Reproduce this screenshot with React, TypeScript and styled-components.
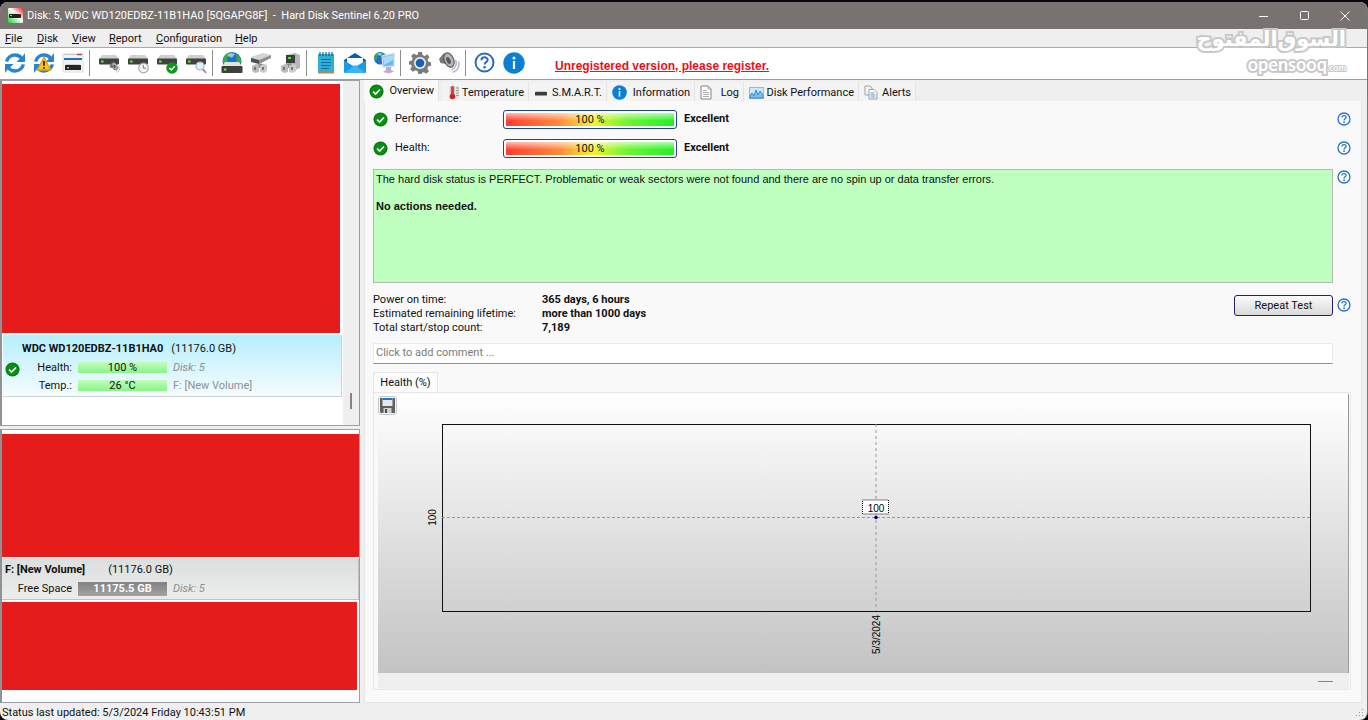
import React from "react";
import styled, { createGlobalStyle, css } from "styled-components";

const UI_FONT = `Roboto, "Noto Sans", sans-serif`;
const ARIAL = `"Liberation Sans", Arial, sans-serif`;

const GlobalStyle = createGlobalStyle`
  *, *::before, *::after { box-sizing: border-box; }
  body { margin: 0; background: #08070d; color: #111; font: 11px/14px ${UI_FONT}; }
  button, input { font: inherit; color: inherit; margin: 0; }
  svg { display: block; flex: none; }
  h1, h2, p, dl, dd, dt, ul { margin: 0; padding: 0; font: inherit; }
`;

/* ---------- window frame ---------- */

const Desktop = styled.div`
  min-height: 100vh;
  padding-top: 2px;
  display: flex;
  flex-direction: column;
`;

const Window = styled.div`
  position: relative;
  flex: 1;
  display: flex;
  flex-direction: column;
  border-right: 1px solid #77747a;
  border-radius: 8px;
  overflow: hidden;
  background: #efefef;
`;

const TitleBar = styled.header`
  display: flex;
  align-items: center;
  height: 27px;
  padding: 0 12px 0 8px;
  background: #787371;
  color: #fff;
`;

const Title = styled.h1`
  flex: 1;
  padding-left: 4px;
  white-space: pre;
`;

const WindowButton = styled.button`
  display: grid;
  place-items: center;
  width: 41px;
  height: 25px;
  padding: 0;
  border: 0;
  background: none;
  &:last-child { width: 20px; margin-left: 10px; }
`;

const MenuBar = styled.nav`
  display: flex;
  height: 18px;
`;

const MenuButton = styled.button<{ $w: number }>`
  width: ${(p) => p.$w}px;
  padding: 2px 5px 0;
  border: 0;
  background: none;
  text-align: left;
`;

const Toolbar = styled.div`
  display: flex;
  align-items: center;
  height: 33px;
  padding-bottom: 2px;
  background: #fff;
  border-top: 1px solid #a9a9a9;
  border-bottom: 1px solid #9c9c9c;
`;

const ToolButton = styled.button`
  display: grid;
  place-items: center;
  width: 29px;
  height: 28px;
  padding: 0;
  border: 0;
  background: none;
`;

const ToolSeparator = styled.span`
  width: 1px;
  height: 26px;
  margin: 0 4px 0 2px;
  background: #8c8c8c;
`;

const RegisterLink = styled.a`
  margin-left: 27px;
  padding-top: 6px;
  color: #f00c18;
  font: bold 12px/16px ${ARIAL};
`;

const Main = styled.main`
  flex: 1;
  display: flex;
`;

const StatusBar = styled.footer`
  display: flex;
  justify-content: space-between;
  height: 17px;
  padding: 3px 2px 0;
`;

/* ---------- left side ---------- */

const Sidebar = styled.aside`
  display: flex;
  flex-direction: column;
  gap: 3px;
  width: 360px;
  flex: none;
`;

const ListBox = styled.section<{ $grow?: boolean }>`
  display: flex;
  background: #fff;
  border: 1px solid #9aa0a5;
  border-left: 2px solid #8d9399;
  ${(p) => (p.$grow ? "flex: 1;" : "height: 346px;")}
`;

const ListItems = styled.div<{ $top: number }>`
  flex: 1;
  display: flex;
  flex-direction: column;
  padding-top: ${(p) => p.$top}px;
`;

const ScrollTrack = styled.div`
  display: flex;
  align-items: flex-end;
  justify-content: center;
  width: 16px;
  padding-bottom: 16px;
  background: #efefef;
`;

const ScrollThumb = styled.span`
  width: 2px;
  height: 16px;
  background: #858585;
`;

const HiddenBlock = styled.div<{ $h: number; $inset: number }>`
  height: ${(p) => p.$h}px;
  margin-right: ${(p) => p.$inset}px;
  background: #e61b1b;
`;

const DriveCard = styled.article`
  display: flex;
  align-items: center;
  height: 62px;
  margin: 2px 1px 0;
  border-right: 1px solid #c3d6dc;
  border-bottom: 1px solid #cbd3d6;
  border-top: 1px solid #cdebf4;
  background: linear-gradient(#b6effc, #f6fcfe);
  svg { margin: 7px 2px 0; }
`;

const DriveBody = styled.div`
  flex: 1;
  display: flex;
  flex-direction: column;
  gap: 4px;
`;

const DriveName = styled.h2`
  line-height: 17px;
  b { margin-right: 8px; }
`;

const MeterRow = styled.div<{ $label: number }>`
  display: grid;
  grid-template-columns: ${(p) => p.$label}px 89px 1fr;
  column-gap: 6px;
  align-items: center;
  height: 14px;
  > :first-child { text-align: right; }
`;

const SmallBar = styled.span<{ $free?: boolean }>`
  display: block;
  height: ${(p) => (p.$free ? 14 : 11)}px;
  line-height: ${(p) => (p.$free ? 14 : 11)}px;
  text-align: center;
  background: linear-gradient(#c2fdbd, #8af488);
  ${(p) =>
    p.$free &&
    css`
      background: linear-gradient(#828282, #a2a2a2);
      color: #fff;
      font-weight: 700;
    `}
`;

const Muted = styled.span`
  color: #8b9092;
`;

const VolumeCard = styled.article`
  display: flex;
  flex-direction: column;
  gap: 5px;
  height: 42px;
  margin: 1px 0 2px;
  padding: 3px 0 0 3px;
  border: 1px solid #c2c2c2;
  border-left: 0;
  border-top-color: #dadada;
  background: linear-gradient(#dcdfdf, #ececec);
`;

const VolumeName = styled.h2`
  display: flex;
  gap: 23px;
  line-height: 15px;
`;

/* ---------- right side ---------- */

const Details = styled.section`
  flex: 1;
  min-width: 0;
  display: flex;
  flex-direction: column;
  padding: 0 5px 0 4px;
`;

const Tabs = styled.div`
  display: flex;
  align-items: flex-end;
  height: 21px;
`;

const Tab = styled.button<{ $w: number; $active?: boolean }>`
  display: flex;
  align-items: center;
  justify-content: space-between;
  width: ${(p) => p.$w}px;
  height: 19px;
  padding: 2px 4px 0 5px;
  border: 0;
  border-right: 1px solid #e3e3e3;
  background: #f3f3f3;
  white-space: nowrap;
  ${(p) =>
    p.$active &&
    css`
      height: 21px;
      padding-bottom: 1px;
      margin-right: 3px;
      background: #f9f9f9;
    `}
`;

const Page = styled.div`
  flex: 1;
  display: flex;
  flex-direction: column;
  padding: 8px 10px 12px 8px;
  background: #f9f9f9;
  border: 1px solid #e6e6e6;
  border-top: 0;
`;

const HelpRow = styled.div`
  display: grid;
  grid-template-columns: minmax(0, 1fr) 14px;
  column-gap: 4px;
  align-items: start;
`;

const HelpButton = styled.button<{ $drop?: number }>`
  display: grid;
  width: 14px;
  height: 14px;
  margin-top: ${(p) => p.$drop ?? 3}px;
  padding: 0;
  border: 0;
  background: none;
`;

const Score = styled.div`
  display: grid;
  grid-template-columns: 22px 108px 174px 1fr;
  align-items: center;
  height: 20px;
  margin-bottom: 9px;
  line-height: 16px;
  b { padding-left: 7px; }
`;

const ScoreBar = styled.div`
  height: 19px;
  padding: 2px;
  border: 1px solid #1f4688;
  border-radius: 3px;
  background: #fff;
  text-align: center;
  span {
    display: block;
    height: 13px;
    line-height: 13px;
    background:
      linear-gradient(rgba(255, 255, 255, 0.65), rgba(255, 255, 255, 0) 60%),
      linear-gradient(90deg, #ff3b30, #ff8a3c 32%, #f3f52c 52%, #6df531 72%, #22f02a);
  }
`;

const StatusText = styled.div`
  height: 114px;
  margin-top: 2px;
  padding: 3px 2px;
  border: 1px solid #b4bab0;
  background: #bfffbf;
  font: 11px/13px ${ARIAL};
  p + p { margin-top: 14px; font-weight: 700; }
`;

const InfoRow = styled.div`
  display: flex;
  justify-content: space-between;
  height: 60px;
  padding-top: 10px;
`;

const Facts = styled.dl`
  display: grid;
  grid-template-columns: 169px auto;
  grid-auto-rows: 14px;
  dd { font-weight: 700; }
`;

const RepeatButton = styled.button`
  width: 99px;
  height: 21px;
  margin-top: 2px;
  padding: 0;
  border: 1px solid #20206e;
  border-radius: 3px;
  background: linear-gradient(#fafafa, #d9d9d9);
`;

const Comment = styled.input`
  width: 100%;
  height: 21px;
  padding: 0 2px 2px;
  border: 1px solid #ededed;
  border-bottom-color: #8e8e8e;
  background: #fff;
  &::placeholder { color: #7b7b7b; opacity: 1; }
`;

const HealthTab = styled.button`
  align-self: flex-start;
  width: 65px;
  height: 20px;
  margin-top: 8px;
  padding: 0;
  border: 1px solid #e6e6e6;
  border-bottom: 0;
  background: #fcfcfc;
`;

const ChartPanel = styled.div`
  flex: 1;
  display: flex;
  flex-direction: column;
  padding: 1px 1px 0 4px;
  border: 1px solid #e9e9e9;
`;

const Chart = styled.div`
  flex: 1;
  display: flex;
  flex-direction: column;
  padding: 2px 38px 62px 64px;
  border-right: 1px solid #999;
  background: linear-gradient(#fff, #c3c3c3);
`;

const SaveButton = styled.button`
  display: grid;
  place-items: center;
  width: 19px;
  height: 19px;
  margin: 0 0 9px -64px;
  padding: 0;
  border: 1px solid #c9c9c9;
  border-radius: 3px;
  background: #f3f3f3;
`;

const Plot = styled.svg`
  flex: 1 1 186px;
  width: 100%;
  min-height: 186px;
  overflow: visible;
  font: 10px ${ARIAL};
`;

const ChartScroll = styled.div`
  display: flex;
  justify-content: flex-end;
  align-items: center;
  height: 16px;
  padding-right: 16px;
  background: #efefef;
  span { width: 15px; height: 1px; background: #858585; }
`;

/* ---------- watermark ---------- */

const Watermark = styled.div`
  position: absolute;
  top: 22px;
  right: 21px;
  display: flex;
  flex-direction: column;
  align-items: flex-end;
  color: #fff;
  -webkit-text-stroke: 4px #c8c8c8;
  paint-order: stroke fill;
  pointer-events: none;
`;

const WatermarkArabic = styled.div`
  display: flex;
  font: bold 21px/30px "DejaVu Sans", sans-serif;
  white-space: nowrap;
`;

const WatermarkLatin = styled.div`
  display: flex;
  align-items: baseline;
  font: bold 18px/20px Lato, sans-serif;
  small { font-size: 9px; line-height: 12px; -webkit-text-stroke-width: 2px; }
`;

/* ---------- icons ---------- */

const Check = ({ size = 15 }: { size?: number }) => (
  <svg width={size} height={size} viewBox="0 0 16 16">
    <circle cx="8" cy="8" r="7.5" fill="#0a8f13" />
    <circle cx="8" cy="8" r="6.6" fill="none" stroke="#0b780f" />
    <path d="M4.4 8.2 7 10.7 11.7 5.8" fill="none" stroke="#fff" strokeWidth="1.7" />
  </svg>
);

const Question = ({ size = 14, color = "#2b72c8" }: { size?: number; color?: string }) => (
  <svg width={size} height={size} viewBox="0 0 22 22">
    <circle cx="11" cy="11" r="9.4" fill="#fff" stroke={color} strokeWidth="2.1" />
    <path d="M7.8 8.7c0-4.2 6.5-4 6.5-.4 0 2.4-3.2 2.3-3.2 4.9" fill="none" stroke={color} strokeWidth="2.1" />
    <circle cx="11.1" cy="16" r="1.4" fill={color} />
  </svg>
);

const Info = ({ size = 15 }: { size?: number }) => (
  <svg width={size} height={size} viewBox="0 0 22 22">
    <circle cx="11" cy="11" r="10.7" fill="#0b80d2" />
    <circle cx="11" cy="6" r="1.5" fill="#fff" />
    <rect x="9.9" y="9" width="2.2" height="8" fill="#fff" />
  </svg>
);

const AppIcon = () => (
  <svg width="15" height="15" viewBox="0 0 15 15">
    <defs>
      <linearGradient id="appIcon" x1="1" y1="0" x2="0" y2="1">
        <stop offset="0" stopColor="#f02323" />
        <stop offset=".45" stopColor="#fff" />
        <stop offset="1" stopColor="#10d52a" />
      </linearGradient>
    </defs>
    <rect width="15" height="15" rx="1" fill="url(#appIcon)" />
    <path d="m3 5 8-1 2 2H1z" fill="#ddd" />
    <rect x="1" y="6" width="12" height="4" rx="1" fill="#222" />
    <rect x="2" y="7" width="2" height="1" fill="#4f4" />
  </svg>
);

const RefreshShape = () => (
  <g fill="none" stroke="#2785d3" strokeWidth="3.4">
    <path d="M2.6 9.6C3.6 5.6 7 3 11 3c2.8 0 5.2 1.3 6.6 3.4" />
    <path d="M19.4 12.4C18.4 16.4 15 19 11 19c-2.8 0-5.2-1.3-6.6-3.4" />
    <path d="M21 1v9h-8.500l3-3L18 5zM1 21v-9h8.500l-3 3L4 17z" fill="#2785d3" stroke="none" />
  </g>
);

const DriveShape = () => (
  <g>
    <path d="M4 4h14l3 4H1z" fill="#cfcfcf" />
    <rect x="1" y="7.500" width="20" height="6" rx="1" fill="#414141" />
    <rect x="3" y="9.500" width="2.600" height="2" fill="#55f02c" />
  </g>
);

const Speaker = () => (
  <g>
    <path d="M1 7 5.500 1.500 11 2l4 12-3 2-4-4-5.500-1z" fill="#77777a" />
    <ellipse cx="11" cy="8" rx="4.600" ry="7.500" transform="rotate(-24 11 8)" fill="#b4b5b8" stroke="#5d5d60" strokeWidth="1.200" />
    <ellipse cx="10.500" cy="8.500" rx="2" ry="3.600" transform="rotate(-24 10.500 8.500)" fill="#55565a" />
    <path d="M17.500 8c2 4 0 8-4 10M20.500 9.500c1.300 5-1 9-6 11" fill="none" stroke="#b4b4cc" strokeWidth="1.500" />
  </g>
);

const Globe = () => (
  <g>
    <circle cx="11" cy="9.500" r="9.500" fill="#1c72c8" />
    <path d="M3 5C5 1.500 9 0 12 .5L10 4 6 6l1 4-3 3C1.500 11 1.500 8 3 5zM14 2c4 1 6 4 6.500 8L17 13l-2-4 1-3z" fill="#3ba84a" />
    <path d="M6 3c3-2 6-2 8-1l-3 4z" fill="#bfe7ff" opacity=".7" />
  </g>
);

const Plug = () => (
  <g>
    <path d="M7 13c2-2 5-2 7 0v3H7z" fill="#8b8d8e" />
    <path d="M2 14l4-2 3 1v7l-4 1-3-2z" fill="#b9bbbc" />
    <path d="M10 14l4-2 3 1v6l-3 2-4-1z" fill="#c9cbcc" />
    <path d="M4 15h2v3H4zM12 15h2v3h-2z" fill="#737576" />
  </g>
);

const toolIcons: Record<string, React.ReactNode> = {
  refresh: <RefreshShape />,
  warn: (
    <>
      <RefreshShape />
      <path d="M11 5.500 17.800 18H4.200z" fill="#fdc514" stroke="#e2a20b" strokeLinejoin="round" strokeWidth="1.500" />
      <path d="M11 9v4.800" stroke="#3b2d0a" strokeWidth="1.900" />
      <circle cx="11" cy="16" r="1.100" fill="#3b2d0a" />
    </>
  ),
  panel: (
    <>
      <path d="M1 2h20v18H1z" fill="#f3f3f3" stroke="#dcdcdc" />
      <path d="M2 2.500h13" stroke="#c2c6cc" />
      <path d="M15 2.500h5" stroke="#dc3b46" strokeWidth="1.500" />
      <path d="M2 7h18" stroke="#2270c6" strokeWidth="2.200" />
      <path d="M5 12h12l2 2H3z" fill="#d0d0d0" />
      <rect x="3" y="13" width="16" height="5" rx=".5" fill="#242424" />
      <rect x="5" y="15" width="2" height="1.500" fill="#5f5" />
    </>
  ),
  driveSound: (
    <>
      <g transform="translate(0 -1)"><DriveShape /></g>
      <g transform="translate(11 10) scale(.52)"><Speaker /></g>
    </>
  ),
  driveClock: (
    <>
      <g transform="translate(0 -1)"><DriveShape /></g>
      <circle cx="16.500" cy="16" r="4.800" fill="#f5f5f5" stroke="#a8a8a8" strokeWidth="1.200" />
      <path d="M16.300 12.800v3.400h2.700" fill="none" stroke="#777" />
    </>
  ),
  driveCheck: (
    <>
      <g transform="translate(0 -1)"><DriveShape /></g>
      <circle cx="16" cy="16" r="5.700" fill="#0e9818" />
      <path d="m13.300 16 2 2 3.500-3.700" fill="none" stroke="#fff" strokeWidth="1.500" />
    </>
  ),
  driveSearch: (
    <>
      <g transform="translate(0 -1)"><DriveShape /></g>
      <circle cx="15" cy="14" r="4" fill="#dff0fb" stroke="#9fb6c8" strokeWidth="1.200" />
      <path d="m17.800 17 3.200 4" stroke="#9a8a92" strokeWidth="1.800" />
    </>
  ),
  globe: (
    <>
      <Globe />
      <path d="M4 10h14l3.500 5H.5z" fill="#e2e2e2" />
      <rect x=".5" y="14" width="21" height="7" rx="1" fill="#3d3f3f" />
      <rect x="3" y="16.500" width="2.400" height="2" fill="#5bf33a" />
    </>
  ),
  plug: (
    <>
      <path d="m1 5 12-4 8 2-12 5-8-1z" fill="#d2d3d4" />
      <path d="m1 6 8 2v4L1 10z" fill="#4c4d4e" />
      <path d="m9 8 12-5v3L9 12z" fill="#8c8d8e" />
      <Plug />
    </>
  ),
  plugBox: (
    <>
      <path d="m7 3 9-2 5 2v13l-5 2-9-4z" fill="#b5b7b7" />
      <path d="M7 3h9v8H7z" fill="#3b3d3d" />
      <rect x="9" y="5" width="3" height="2" fill="#52e73a" />
      <Plug />
    </>
  ),
  notes: (
    <>
      <path d="M3 2h16v17H3z" fill="#2fafd8" />
      <path d="M3 19h16v2.500H3z" fill="#b9884e" />
      <path d="M5 0v4M8 0v4M11 0v4M14 0v4M17 0v4" stroke="#14566f" strokeWidth="1.100" />
      <path d="M6 7.500h10M6 10.500h10M6 13.500h10M6 16.500h8" stroke="#0e6f98" />
    </>
  ),
  mail: (
    <>
      <path d="M0 8 11 1l11 7v3H0z" fill="#0c5da3" />
      <path d="M3 6h16v9H3z" fill="#f4fafd" />
      <path d="M0 8.500 11 15l11-6.500V21H0z" fill="#1b9be0" />
      <path d="M0 21 11 13l11 8z" fill="#36b5f0" />
    </>
  ),
  network: (
    <>
      <g transform="scale(.66)"><Globe /></g>
      <path d="M9 4 21 1.500V14L10 15z" fill="#67b8ee" stroke="#d5dbe2" strokeWidth="1.300" />
      <path d="M10 5 20 3v5l-9 5z" fill="#a8dbfa" />
      <path d="M13 15h5v3l3 1.500-5 2-6-1.500 3-2z" fill="#b9a9dc" />
    </>
  ),
  gear: (
    <>
      <path
        d="M9 0h4l.6 3 2.200.9L18.400 2.200l2 3-1.800 2.400.5 1.900 2.900.7v3.600l-2.900.7-.8 2 1.600 2.700-2.600 2.600-2.700-1.600-2 .8L12.700 22H9.300l-.8-3-2-.8-2.700 1.600-2.600-2.600 1.600-2.700-.8-2L0 12.800V9.200l2.900-.7.8-2L2.100 3.900l2.700-2.500L7.400 3 9 2.600z"
        fill="#787b7f"
      />
      <circle cx="11" cy="11" r="6" fill="#e9edf0" />
      <circle cx="11" cy="11" r="4.300" fill="#1761b5" />
    </>
  ),
  speaker: <Speaker />,
};

const ToolIcon = ({ name }: { name: string }) => {
  if (name === "help") return <Question size={21} color="#2a6ac4" />;
  if (name === "info") return <Info size={22} />;
  return (
    <svg width="22" height="22" viewBox="0 0 22 22">
      {toolIcons[name]}
    </svg>
  );
};

const Thermometer = () => (
  <svg width="14" height="15" viewBox="0 0 14 15">
    <path d="M2 1h10v13H2z" fill="#e3e6e6" />
    <path d="M9 3h3M9 5.500h3M9 8h3M9 10.500h3" stroke="#86a595" />
    <rect x="4" y="1" width="3" height="9" rx="1.500" fill="#d53c3c" stroke="#9c8484" strokeWidth=".6" />
    <circle cx="5.500" cy="11.500" r="2.800" fill="#cf2222" />
  </svg>
);

const SmartIcon = () => (
  <svg width="14" height="14" viewBox="0 0 14 14">
    <path d="M2 5h10l1 2H1z" fill="#c8c8c8" />
    <rect x="1" y="6" width="12" height="3.500" rx=".5" fill="#3c3c3c" />
  </svg>
);

const PageIcon = () => (
  <svg width="12" height="15" viewBox="0 0 12 15">
    <path d="M1 1h7l3 3v10H1z" fill="#fff" stroke="#858585" />
    <path d="M8 1v3h3M3 5.500h4M3 7.500h6M3 9.500h6M3 11.500h6" fill="none" stroke="#999" strokeWidth=".8" />
  </svg>
);

const PerformanceIcon = () => (
  <svg width="15" height="12" viewBox="0 0 15 12">
    <rect x=".5" y=".5" width="14" height="11" fill="#cfe7f8" stroke="#a8b5be" />
    <path d="M1 9 3 6l2 3 2-6 2 5 2-4 3 4v3H1z" fill="#7fc0ea" stroke="#2686cc" strokeWidth=".9" />
  </svg>
);

const AlertsIcon = () => (
  <svg width="14" height="15" viewBox="0 0 14 15">
    <path d="M1 1h5l2 2v7H1z" fill="#f5f5f5" stroke="#9a9a9a" strokeWidth=".9" />
    <path d="M5 4.500h5l3 3V14H5z" fill="#fff" stroke="#8d97a5" strokeWidth=".9" />
    <path d="M6.500 8h4M6.500 10h5M6.500 12h5" stroke="#5089cc" strokeWidth=".9" />
  </svg>
);

const Floppy = () => (
  <svg width="15" height="15" viewBox="0 0 15 15">
    <path d="M0 0h15v15H1l-1-1z" fill="#5c6065" />
    <path d="M2.500 0h10v8h-10z" fill="#e4e8ea" />
    <path d="M2.500 0h10v2h-10z" fill="#1a7ad0" />
    <path d="M3.500 10h8v5h-8z" fill="#cfd2d4" />
    <path d="M5 11h2v4H5z" fill="#4a4d51" />
  </svg>
);

const Grip = () => (
  <svg width="9" height="12" viewBox="0 0 9 12" fill="#9a9a9a">
    <path d="M6 3h1v1H6zM6 6h1v1H6zM3 6h1v1H3zM6 9h1v1H6zM3 9h1v1H3zM0 9h1v1H0z" />
  </svg>
);

/* ---------- content ---------- */

const menus: [string, number][] = [
  ["File", 32],
  ["Disk", 35],
  ["View", 37],
  ["Report", 47],
  ["Configuration", 79],
  ["Help", 30],
];

const toolGroups: [string, string][][] = [
  [["refresh", "Refresh"], ["warn", "Refresh problems"], ["panel", "Panel layout"]],
  [["driveSound", "Acoustic"], ["driveClock", "Short test"], ["driveCheck", "Extended test"], ["driveSearch", "Surface test"]],
  [["globe", "Online disks"], ["plug", "Connect"], ["plugBox", "Power"]],
  [["notes", "Report"], ["mail", "Send mail"], ["network", "Network"]],
  [["gear", "Options"], ["speaker", "Sound"]],
  [["help", "Help"], ["info", "About"]],
];

const tabs: [string, React.ReactNode, number][] = [
  ["Overview", <Check />, 75],
  ["Temperature", <Thermometer />, 87],
  ["S.M.A.R.T.", <SmartIcon />, 78],
  ["Information", <Info />, 88],
  ["Log", <PageIcon />, 49],
  ["Disk Performance", <PerformanceIcon />, 115],
  ["Alerts", <AlertsIcon />, 57],
];

const facts: [string, string][] = [
  ["Power on time:", "365 days, 6 hours"],
  ["Estimated remaining lifetime:", "more than 1000 days"],
  ["Total start/stop count:", "7,189"],
];

const Help = ({ drop }: { drop?: number }) => (
  <HelpButton $drop={drop} aria-label="Help">
    <Question />
  </HelpButton>
);

const HealthChart = () => (
  <Plot>
    <rect x=".5" y=".5" width="100%" height="100%" fill="none" stroke="#111" />
    <line x1="0" x2="100%" y1="50%" y2="50%" stroke="#999" strokeDasharray="3 2" />
    <line x1="50%" x2="50%" y1="0" y2="100%" stroke="#999" strokeDasharray="3 3" />
    <svg x="50%" y="50%" overflow="visible">
      <rect x="-13.500" y="-17.500" width="26" height="14" fill="#fff" stroke="#111" strokeDasharray="1 1" />
      <text x="0" y="-6" textAnchor="middle">100</text>
      <circle r="1.800" fill="#00006e" />
    </svg>
    <svg x="0" y="50%" overflow="visible">
      <text transform="rotate(-90)" x="0" y="-6" textAnchor="middle">100</text>
    </svg>
    <svg x="50%" y="100%" overflow="visible">
      <text transform="rotate(-90)" x="-4" y="4" textAnchor="end">5/3/2024</text>
    </svg>
  </Plot>
);

export default function App() {
  return (
    <Desktop>
      <GlobalStyle />
      <Window>
        <TitleBar>
          <AppIcon />
          <Title>{"Disk: 5, WDC WD120EDBZ-11B1HA0 [5QGAPG8F]  -  Hard Disk Sentinel 6.20 PRO"}</Title>
          <WindowButton aria-label="Minimize">
            <svg width="10" height="10"><path d="M0 5.500h9" stroke="#fff" /></svg>
          </WindowButton>
          <WindowButton aria-label="Maximize">
            <svg width="10" height="10"><rect x=".5" y=".5" width="8" height="8" rx="1" fill="none" stroke="#fff" /></svg>
          </WindowButton>
          <WindowButton aria-label="Close">
            <svg width="10" height="10"><path d="m.5.5 9 9m0-9-9 9" stroke="#fff" /></svg>
          </WindowButton>
        </TitleBar>

        <MenuBar>
          {menus.map(([name, w]) => (
            <MenuButton key={name} $w={w}>
              <u>{name[0]}</u>
              {name.slice(1)}
            </MenuButton>
          ))}
        </MenuBar>

        <Toolbar>
          {toolGroups.map((group, i) => (
            <React.Fragment key={i}>
              {i > 0 && <ToolSeparator />}
              {group.map(([icon, label]) => (
                <ToolButton key={icon} aria-label={label}>
                  <ToolIcon name={icon} />
                </ToolButton>
              ))}
            </React.Fragment>
          ))}
          <RegisterLink href="#register">Unregistered version, please register.</RegisterLink>
        </Toolbar>

        <Main>
          <Sidebar>
            <ListBox>
              <ListItems $top={3}>
                <HiddenBlock $h={249} $inset={3} />
                <DriveCard>
                  <Check />
                  <DriveBody>
                    <DriveName>
                      <b>WDC WD120EDBZ-11B1HA0</b>(11176.0 GB)
                    </DriveName>
                    <MeterRow $label={50}>
                      <span>Health:</span>
                      <SmallBar>100 %</SmallBar>
                      <Muted><i>Disk: 5</i></Muted>
                    </MeterRow>
                    <MeterRow $label={50}>
                      <span>Temp.:</span>
                      <SmallBar>26 °C</SmallBar>
                      <Muted>F: [New Volume]</Muted>
                    </MeterRow>
                  </DriveBody>
                </DriveCard>
              </ListItems>
              <ScrollTrack><ScrollThumb /></ScrollTrack>
            </ListBox>

            <ListBox $grow>
              <ListItems $top={4}>
                <HiddenBlock $h={123} $inset={0} />
                <VolumeCard>
                  <VolumeName>
                    <b>F: [New Volume]</b>(11176.0 GB)
                  </VolumeName>
                  <MeterRow $label={67}>
                    <span>Free Space</span>
                    <SmallBar $free>11175.5 GB</SmallBar>
                    <Muted><i>Disk: 5</i></Muted>
                  </MeterRow>
                </VolumeCard>
                <HiddenBlock $h={88} $inset={2} />
              </ListItems>
            </ListBox>
          </Sidebar>

          <Details>
            <Tabs role="tablist">
              {tabs.map(([name, icon, w], i) => (
                <Tab key={name} role="tab" aria-selected={i === 0} $active={i === 0} $w={w}>
                  {icon}
                  <span>{name}</span>
                </Tab>
              ))}
            </Tabs>

            <Page>
              {["Performance:", "Health:"].map((name) => (
                <HelpRow key={name}>
                  <Score>
                    <Check />
                    <span>{name}</span>
                    <ScoreBar><span>100 %</span></ScoreBar>
                    <b>Excellent</b>
                  </Score>
                  <Help />
                </HelpRow>
              ))}
              <HelpRow>
                <StatusText>
                  <p>
                    The hard disk status is PERFECT. Problematic or weak sectors were not found and there are no spin up
                    or data transfer errors.
                  </p>
                  <p>No actions needed.</p>
                </StatusText>
                <Help />
              </HelpRow>
              <HelpRow>
                <InfoRow>
                  <Facts>
                    {facts.map(([k, v]) => (
                      <React.Fragment key={k}>
                        <dt>{k}</dt>
                        <dd>{v}</dd>
                      </React.Fragment>
                    ))}
                  </Facts>
                  <RepeatButton>Repeat Test</RepeatButton>
                </InfoRow>
                <Help drop={15} />
              </HelpRow>
              <HelpRow>
                <Comment aria-label="Comment" placeholder="Click to add comment ..." />
              </HelpRow>
              <HealthTab>Health (%)</HealthTab>
              <ChartPanel>
                <Chart>
                  <SaveButton aria-label="Save chart"><Floppy /></SaveButton>
                  <HealthChart />
                </Chart>
                <ChartScroll><span /></ChartScroll>
              </ChartPanel>
            </Page>
          </Details>
        </Main>

        <StatusBar>
          <span>Status last updated: 5/3/2024 Friday 10:43:51 PM</span>
          <Grip />
        </StatusBar>

        <Watermark>
          <WatermarkArabic dir="rtl" lang="ar">
            <span>السوق</span>
            <span>المفتوح</span>
          </WatermarkArabic>
          <WatermarkLatin>
            <span>opensooq</span>
            <small>.com</small>
          </WatermarkLatin>
        </Watermark>
      </Window>
    </Desktop>
  );
}
